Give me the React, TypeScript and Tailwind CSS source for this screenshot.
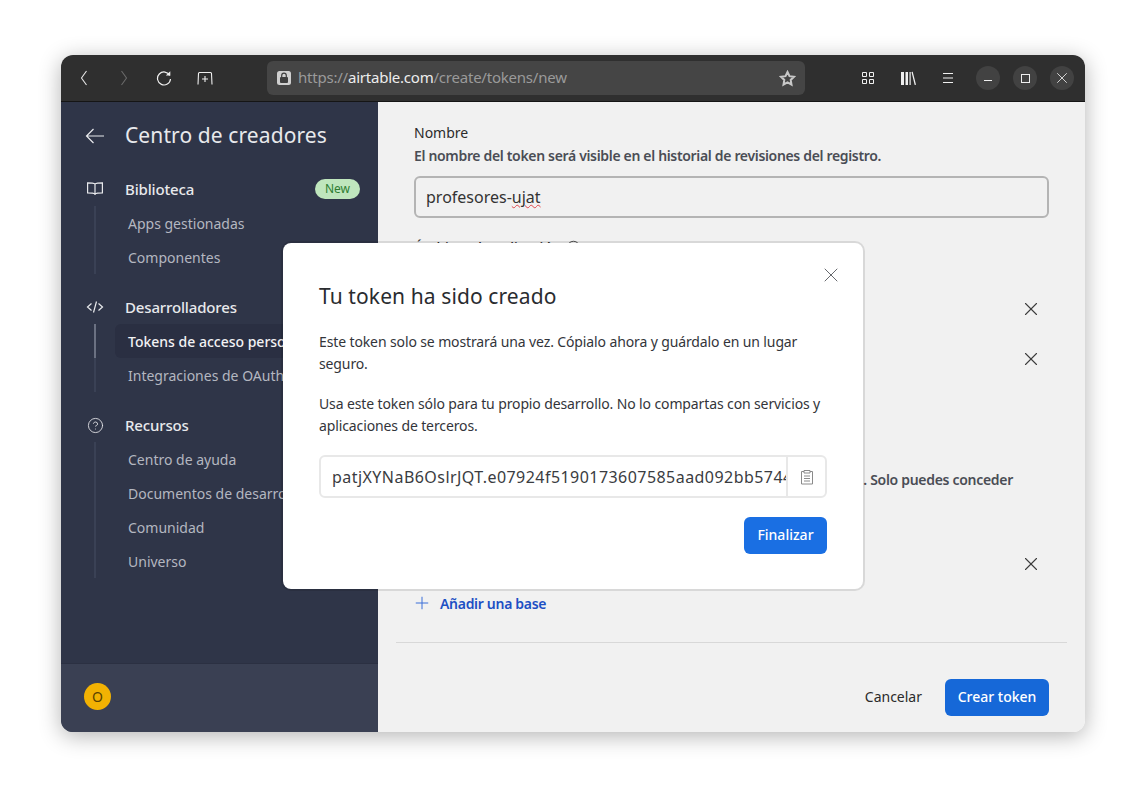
import { CircleHelp, Plus, X } from 'lucide-react';

const FONT = "font-['Noto_Sans',sans-serif]";

function BackArrow() {
  return (
    <svg width="22" height="18" viewBox="0 0 22 18" fill="none" stroke="currentColor" strokeWidth="1.2">
      <path d="M20 9H2.500M9.500 2 2.500 9l7 7" />
    </svg>
  );
}

function BookIcon() {
  return (
    <svg width="16" height="14" viewBox="0 0 16 14" fill="none" stroke="currentColor" strokeWidth="1.2">
      <path d="M8 2C6.600 1 4 .8.600.800v10c3.400 0 6 .2 7.400 1.200 1.400-1 4-1.200 7.400-1.200v-10C12 .8 9.400 1 8 2zM8 2v11" />
    </svg>
  );
}

function CodeIcon() {
  return (
    <svg width="18" height="16" viewBox="0 0 18 16" fill="none" stroke="currentColor" strokeWidth="1.2">
      <path d="M5.500 4.500 1.500 8l4 3.500M12.500 4.500l4 3.500-4 3.500M10.500 2.500l-3 11" />
    </svg>
  );
}

function SubItem({ label, active }: { label: string; active?: boolean }) {
  return (
    <div className="relative flex h-[34px] items-center">
      <span className={`absolute left-[-34px] top-0 h-full w-[2px] ${active ? 'bg-[#6b7182]' : 'bg-[#3a4155]'}`} />
      <span
        className={`ml-[-13px] flex h-full items-center whitespace-nowrap rounded-l-md pl-[13px] text-[14px] ${
          active ? 'w-[200px] bg-[#2a2f42] font-medium text-[#f2f2f4]' : 'w-[190px] text-[#b4b7c0]'
        }`}
      >
        {label}
      </span>
    </div>
  );
}

function NavGroup({
  icon,
  title,
  badge,
  items,
  activeItem
}: {
  icon: React.ReactNode;
  title: string;
  badge?: boolean;
  items: string[];
  activeItem?: string;
}) {
  return (
    <div className="mb-[16px]">
      <div className="flex h-[34px] items-center text-[#e8e9ec]">
        <span className="flex w-[22px] justify-center">{icon}</span>
        <span className="ml-[19px] text-[15px] font-medium tracking-[-0.15px]">{title}</span>
        {badge && (
          <span className="ml-auto mr-[18px] rounded-full bg-[#bfe6bd] px-[10px] py-[1px] text-[12px] leading-[18px] text-[#2e7d32]">
            New
          </span>
        )}
      </div>
      <div className="ml-[44px]">
        {items.map((item) => (
          <SubItem key={item} label={item} active={item === activeItem} />
        ))}
      </div>
    </div>
  );
}

function Sidebar() {
  return (
    <aside className="flex w-[317px] shrink-0 flex-col bg-[#2f3548]">
      <div className="flex-1 pl-[23px] pt-[16px]">
        <div className="mb-[18px] flex h-[36px] items-center text-[#e8e9ec]">
          <BackArrow />
          <span className="ml-[19px] text-[21px] tracking-[0.1px]">Centro de creadores</span>
        </div>
        <NavGroup icon={<BookIcon />} title="Biblioteca" badge items={['Apps gestionadas', 'Componentes']} />
        <NavGroup
          icon={<CodeIcon />}
          title="Desarrolladores"
          items={['Tokens de acceso personal', 'Integraciones de OAuth']}
          activeItem="Tokens de acceso personal"
        />
        <NavGroup
          icon={<CircleHelp size={17} strokeWidth={1.2} />}
          title="Recursos"
          items={['Centro de ayuda', 'Documentos de desarrollo', 'Comunidad', 'Universo']}
        />
      </div>
      <div className="flex h-[69px] items-center border-t border-[#2b3042] bg-[#3a4053] pb-[4px] pl-[23px]">
        <span className="flex h-[27px] w-[27px] items-center justify-center rounded-full bg-[#f2b203] text-[14px] text-[#5a4300]">
          O
        </span>
      </div>
    </aside>
  );
}

function RemoveRow({ spacing }: { spacing: string }) {
  return (
    <div className={`flex h-[24px] items-center justify-end pr-[7px] text-[#3c3c3c] ${spacing}`}>
      <X size={22} strokeWidth={1.2} />
    </div>
  );
}

function TokenForm() {
  return (
    <main className="flex min-w-0 flex-1 flex-col bg-[#f1f1f1]">
      <div className="flex-1 px-[36px] pt-[21px]">
        <p className="mb-[2px] text-[14px] leading-[19px] text-[#2b2b2b]">Nombre</p>
        <p className="mb-[8px] whitespace-nowrap text-[14px] font-semibold leading-[24px] tracking-[-0.33px] text-[#4a4d55]">
          El nombre del token será visible en el historial de revisiones del registro.
        </p>
        <div className="flex h-[42px] items-center rounded-md border-2 border-[#b4b4b4] pl-[10px] text-[16px] text-[#333]">
          profesores-<span className="underline decoration-wavy decoration-[#e0474c] decoration-1">ujat</span>
        </div>
        <div className="mt-[19px] flex h-[20px] items-center gap-[5px] text-[14px] font-medium text-[#2b2b2b]">
          Ámbitos de aplicación
          <CircleHelp size={15} strokeWidth={1.3} />
        </div>
        <RemoveRow spacing="mt-[40px]" />
        <RemoveRow spacing="mt-[26px]" />
        <div className="mt-[96px] flex h-[24px] items-center justify-end whitespace-nowrap pr-[36px] text-[14px] font-semibold tracking-[-0.3px] text-[#4a4d55]">
          . Solo puedes conceder
        </div>
        <RemoveRow spacing="mt-[61px]" />
        <div className="mt-[15px] flex h-[24px] items-center text-[14px] font-semibold tracking-[-0.3px] text-[#1d4fc4]">
          <Plus size={20} strokeWidth={1.2} className="ml-[-2px] text-[#3a6fd8]" />
          <span className="ml-[8px]">Añadir una base</span>
        </div>
      </div>
      <footer className="mx-[18px] flex h-[90px] shrink-0 items-start justify-end border-t border-[#d8d8d8] pr-[18px] pt-[36px]">
        <span className="mr-[23px] flex h-[37px] items-center pb-[3px] text-[14px] text-[#2b2b2b]">Cancelar</span>
        <button className="h-[37px] w-[104px] rounded-md bg-[#1668d8] pb-[3px] text-[14px] font-medium text-white">
          Crear token
        </button>
      </footer>
    </main>
  );
}

function TokenModal() {
  return (
    <div className="absolute left-[220px] top-[186px] h-[350px] w-[584px] rounded-[10px] border-2 border-black/10 bg-white bg-clip-padding pl-[36px] pr-[36px] pt-[33px] text-[#33353a]">
      <button className="absolute right-[20px] top-[20px] text-[#55575c]">
        <X size={24} strokeWidth={0.9} />
      </button>
      <h2 className="text-[21px] leading-[40px] tracking-[0.1px] text-[#2a2c30]">Tu token ha sido creado</h2>
      <p className="mt-[15px] text-[14px] leading-[22px] tracking-[-0.12px]">
        Este token solo se mostrará una vez. Cópialo ahora y guárdalo en un lugar seguro.
      </p>
      <p className="mt-[18px] text-[14px] leading-[22px] tracking-[-0.12px]">
        Usa este token sólo para tu propio desarrollo. No lo compartas con servicios y aplicaciones de terceros.
      </p>
      <div className="mt-[18px] flex h-[43px] items-stretch rounded-md border-2 border-[#e8e8e8]">
        <span className="min-w-0 flex-1 self-center overflow-hidden whitespace-nowrap pl-[11px] text-[16px] tracking-[0.45px] text-[#3a3c41]">
          patjXYNaB6OslrJQT.e07924f5190173607585aad092bb5744
        </span>
        <span className="flex w-[39px] shrink-0 items-center justify-center border-l-2 border-[#e8e8e8] text-[#8a8a8a]">
          <svg width="14" height="16" viewBox="0 0 14 16" fill="none" stroke="currentColor" strokeWidth="1">
            <path d="M4 2.500H1.500v12.500h11V2.500H10M4 1.500h6v2.500H4zM4 7h6M4 9.500h6M4 12h6" />
          </svg>
        </span>
      </div>
      <div className="mt-[19px] flex justify-end">
        <button className="h-[37px] w-[83px] rounded-md bg-[#1a6fe3] pb-[3px] text-[14px] font-medium text-white">
          Finalizar
        </button>
      </div>
    </div>
  );
}

function BrowserBar() {
  return (
    <header className="flex h-[47px] shrink-0 items-center border-b border-[#151515] bg-[#2f2f2f] pl-[18px] pr-[11px] text-white">
      <svg width="10" height="16" viewBox="0 0 10 16" fill="none" stroke="#e6e6e6" strokeWidth="1.100">
        <path d="M7.500 1 2.500 8l5 7" />
      </svg>
      <svg className="ml-[30px]" width="10" height="16" viewBox="0 0 10 16" fill="none" stroke="#6a6a6a" strokeWidth="1.100">
        <path d="M2.500 1 7.500 8l-5 7" />
      </svg>
      <svg className="ml-[27px]" width="16" height="16" viewBox="0 0 16 16" fill="none" stroke="#f0f0f0" strokeWidth="1.200">
        <path d="M13.800 5.500A6.500 6.500 0 1 0 14.500 9" />
        <path d="M9.800 5.500h4.500V1.200z" fill="#f0f0f0" stroke="none" />
      </svg>
      <svg className="ml-[25px]" width="16" height="14" viewBox="0 0 16 14" fill="none" stroke="#f0f0f0" strokeWidth="1.100">
        <path d="M1 13.500 1.500 2.500Q1.500 1.500 2.500 1.500h11q1 0 1 1l.5 11M8 5v6M5 8h6" />
      </svg>
      <div className="ml-[54px] flex h-[34px] w-[538px] items-center rounded-md bg-[#454545] pl-[10px] pr-[9px]">
        <svg width="14" height="14" viewBox="0 0 14 14">
          <rect width="14" height="14" rx="2.500" fill="#cfcfcf" />
          <rect x="3" y="6" width="8" height="6" rx="1" fill="#3f3f3f" />
          <path d="M4.700 6V4.500a2.300 2.300 0 0 1 4.600 0V6" fill="none" stroke="#3f3f3f" strokeWidth="1.200" />
        </svg>
        <span className={`mb-[2px] ml-[7px] text-[15px] tracking-[-0.22px] text-[#9a9a9a] ${FONT}`}>
          https://<span className="text-[#ededed]">airtable.com</span>/create/tokens/new
        </span>
        <svg className="ml-auto" width="17" height="17" viewBox="0 0 17 17" fill="none" stroke="#c8c8c8" strokeWidth="2">
          <path d="m8.500 2 2 4.200 4.500.6-3.300 3.100.8 4.600-4-2.200-4 2.200.8-4.600L2 6.800l4.500-.6z" />
        </svg>
      </div>
      <svg className="ml-[56px]" width="14" height="14" viewBox="0 0 14 14" fill="none" stroke="#f0f0f0" strokeWidth="1">
        <path d="M1.500 1.500h4v4h-4zM8.500 1.500h4v4h-4zM1.500 8.500h4v4h-4zM8.500 8.500h4v4h-4z" />
      </svg>
      <svg className="ml-[25px]" width="17" height="14" viewBox="0 0 17 14" fill="#f0f0f0">
        <path d="M1 1h3v13H1zM5.500 1h2.500v13H5.500zM9.500 1h1.200v13H9.500zM11.500 1l1.200-.2 3.300 13-1.300.2z" />
      </svg>
      <svg className="ml-[25px]" width="12" height="12" viewBox="0 0 12 12" stroke="#f0f0f0" strokeWidth="1">
        <path d="M1 1.500h10M1 6h10M1 10.500h10" />
      </svg>
      <span className="ml-[22px] flex h-[24px] w-[24px] items-center justify-center rounded-full bg-[#424242]">
        <span className="mt-[4px] h-[1px] w-[8px] bg-[#f0f0f0]" />
      </span>
      <span className="ml-[13px] flex h-[24px] w-[24px] items-center justify-center rounded-full bg-[#424242]">
        <span className="h-[9px] w-[9px] border-[1.5px] border-[#f0f0f0]" />
      </span>
      <span className="ml-[13px] flex h-[24px] w-[24px] items-center justify-center rounded-full bg-[#424242]">
        <X size={18} strokeWidth={1.1} color="#f0f0f0" />
      </span>
    </header>
  );
}

export default function App() {
  return (
    <div className={`flex h-[799px] w-[1146px] bg-white pl-[61px] pt-[55px] ${FONT}`}>
      <div className="relative flex h-[677px] w-[1024px] flex-col overflow-hidden rounded-xl shadow-[0_4px_22px_rgba(0,0,0,0.3)]">
        <BrowserBar />
        <div className="flex min-h-0 flex-1">
          <Sidebar />
          <TokenForm />
        </div>
        <TokenModal />
      </div>
    </div>
  );
}
